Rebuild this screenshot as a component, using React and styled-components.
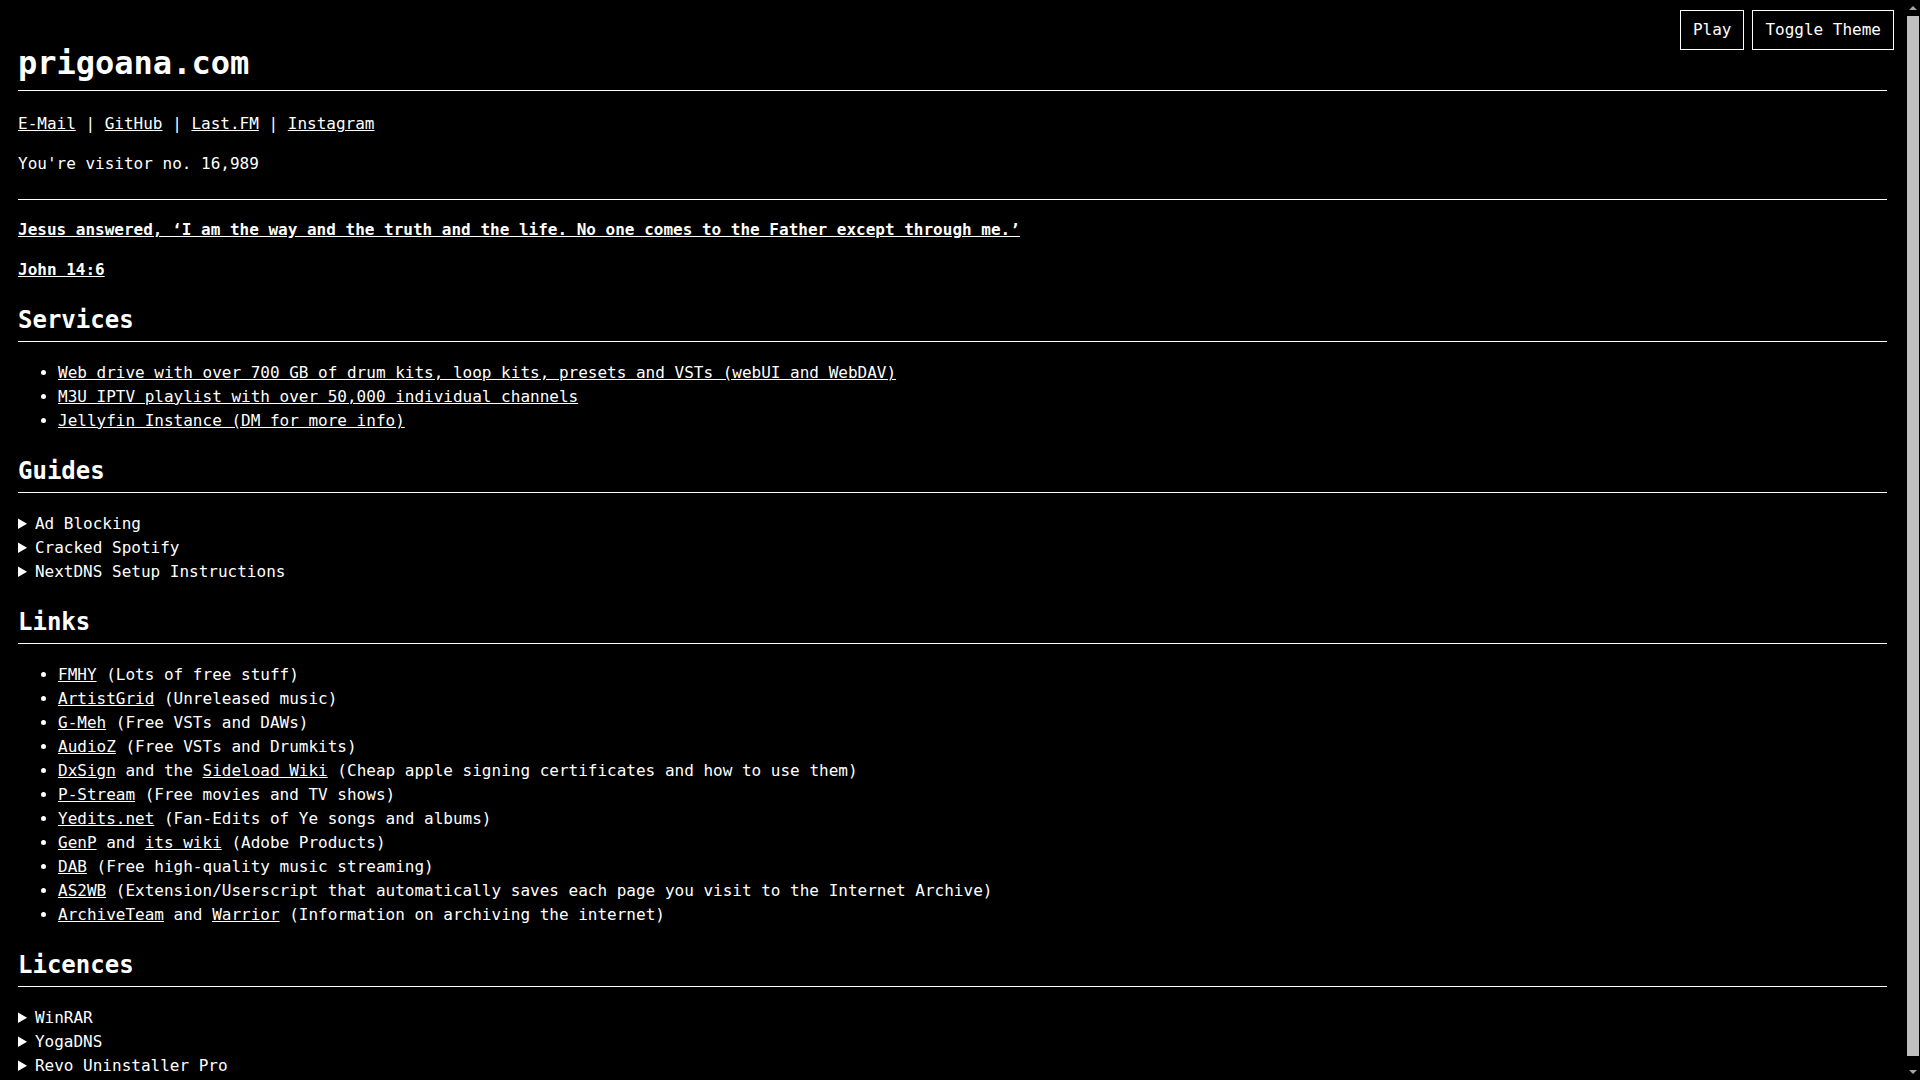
// personal homepage, plain terminal look
import React from 'react'
import styled, { createGlobalStyle } from 'styled-components';

const GlobalStyle = createGlobalStyle`
html, body {
  margin: 0;
  padding: 0;
  background: #000;
}
body {
  color: #fff;
  font-family: "DejaVu Sans Mono", "Liberation Mono", monospace;
  font-size: 16px;
  line-height: 1.5;
}
`

const Page = styled.main`
padding: 18px 33px 14px 18px;
`

const TopBar = styled.div`
position: fixed;
top: 10px;
right: 26px;
display: flex;
gap: 8px;
`

const Button = styled.button`
background: #000;
color: #fff;
border: 1px solid #fff;
font-family: "DejaVu Sans Mono", monospace;
font-size: 16px;
line-height: 22px;
padding: 8px 12px;
cursor: pointer;
`

// window scrollbar as seen in the shot
const ScrollTrack = styled.div`
position: fixed;
top: 0;
right: 0;
width: 15px;
height: 100vh;
background: #000;
display: flex;
flex-direction: column;
align-items: center;
`

const Arrow = styled.div`
width: 0;
height: 0;
margin: 6px 0;
border-left: 4px solid transparent;
border-right: 4px solid transparent;
${p => (p.$down ? 'border-top: 4px solid #a3a3a3;' : 'border-bottom: 4px solid #a3a3a3;')}
`

const Thumb = styled.div`
flex: 1;
width: 12px;
margin: 0 0 8px 1px;
background: #bfbfbf;
`

const Title = styled.h1`
font-size: 32px;
line-height: 1.5;
margin: 21px 0;
padding-bottom: 3px;
border-bottom: 1px solid #fff;
`

const Heading = styled.h2`
font-size: 24px;
line-height: 1.5;
margin: 20px 0 19px;
padding-bottom: 3px;
border-bottom: 1px solid #fff;
`

const Para = styled.p`
margin: 16px 0;
font-weight: ${p => (p.$bold ? 'bold' : 'normal')};
`

const Rule = styled.hr`
border: none;
border-top: 1px solid #fff;
height: 0;
margin: 23px 0 18px;
`

const Link = styled.a`
color: #fff;
text-decoration: underline;
`

const List = styled.ul`
margin: 0;
padding-left: 40px;
`

const Item = styled.li`
line-height: 24px;
`

const Disclosure = styled.details`
line-height: 24px;
summary {
  cursor: pointer;
}
`

const services = [
    'Web drive with over 700 GB of drum kits, loop kits, presets and VSTs (webUI and WebDAV)',
    'M3U IPTV playlist with over 50,000 individual channels',
    'Jellyfin Instance (DM for more info)',
]

const guides = ['Ad Blocking', 'Cracked Spotify', 'NextDNS Setup Instructions']
const licences = ['WinRAR', 'YogaDNS', 'Revo Uninstaller Pro']

const links = [
    { parts: ['FMHY'], note: 'Lots of free stuff' },
    { parts: ['ArtistGrid'], note: 'Unreleased music' },
    { parts: ['G-Meh'], note: 'Free VSTs and DAWs' },
    { parts: ['AudioZ'], note: 'Free VSTs and Drumkits' },
    { parts: ['DxSign', 'Sideload Wiki'], joiner: ' and the ', note: 'Cheap apple signing certificates and how to use them' },
    { parts: ['P-Stream'], note: 'Free movies and TV shows' },
    { parts: ['Yedits.net'], note: 'Fan-Edits of Ye songs and albums' },
    { parts: ['GenP', 'its wiki'], joiner: ' and ', note: 'Adobe Products' },
    { parts: ['DAB'], note: 'Free high-quality music streaming' },
    { parts: ['AS2WB'], note: 'Extension/Userscript that automatically saves each page you visit to the Internet Archive' },
    { parts: ['ArchiveTeam', 'Warrior'], joiner: ' and ', note: 'Information on archiving the internet' },
]

function App() {
    return (
        <>
            <GlobalStyle />
            <TopBar>
                <Button>Play</Button>
                <Button>Toggle Theme</Button>
            </TopBar>
            <ScrollTrack>
                <Arrow />
                <Thumb />
                <Arrow $down />
            </ScrollTrack>
            <Page>
                <Title>prigoana.com</Title>
                <Para>
                    <Link href="#">E-Mail</Link> | <Link href="#">GitHub</Link> | <Link href="#">Last.FM</Link> | <Link href="#">Instagram</Link>
                </Para>
                <Para>You're visitor no. 16,989</Para>
                <Rule />
                <Para $bold>
                    <Link href="#">Jesus answered, ‘I am the way and the truth and the life. No one comes to the Father except through me.’</Link>
                </Para>
                <Para $bold>
                    <Link href="#">John 14:6</Link>
                </Para>

                <Heading>Services</Heading>
                <List>
                    {services.map((s) => (
                        <Item key={s}><Link href="#">{s}</Link></Item>
                    ))}
                </List>

                <Heading>Guides</Heading>
                {guides.map((g) => (
                    <Disclosure key={g}>
                        <summary>{g}</summary>
                    </Disclosure>
                ))}

                <Heading>Links</Heading>
                <List>
                    {links.map((l) => (
                        <Item key={l.parts[0]}>
                            <Link href="#">{l.parts[0]}</Link>
                            {l.parts[1] ? (
                                <>{l.joiner}<Link href="#">{l.parts[1]}</Link></>
                            ) : null}
                            {' (' + l.note + ')'}
                        </Item>
                    ))}
                </List>

                <Heading>Licences</Heading>
                {licences.map((g) => (
                    <Disclosure key={g}>
                        <summary>{g}</summary>
                    </Disclosure>
                ))}
            </Page>
        </>
    )
}

export default App
